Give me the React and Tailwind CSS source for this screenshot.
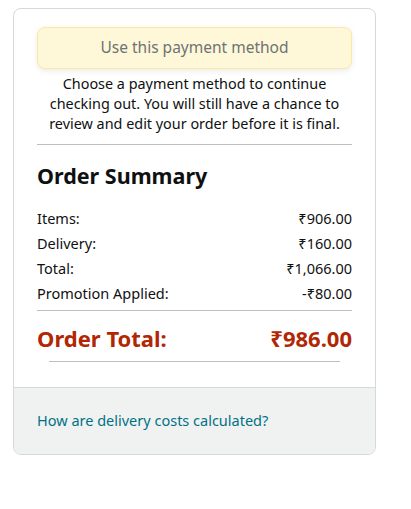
export default function App() {
  const rows = [
    ['Items:', '₹906.00'],
    ['Delivery:', '₹160.00'],
    ['Total:', '₹1,066.00'],
    ['Promotion Applied:', '-₹80.00'],
  ]

  return (
    <div className="min-h-screen bg-white font-['Noto_Sans',sans-serif] text-[#0f1111]">
      <div className="pt-2 pl-[13px]">
        <div className="w-[363px] rounded-lg border border-[#d5d9d9] overflow-hidden">
          <div className="px-[23px] pt-[18px] pb-[25px]">
            <button className="w-full h-[42px] rounded-lg border border-[#fce8a4] bg-[#fef8d9] text-[15.5px] text-[#6f7373] shadow-[0_2px_5px_rgba(213,217,217,0.5)]">
              Use this payment method
            </button>
            <p className="mt-[5px] text-center text-[14.4px] leading-[20px] px-1">
              Choose a payment method to continue checking out. You will still have a chance to review and edit your order before it is final.
            </p>
            <div className="mt-[10px] border-t border-[#bbbfbf]" />
            <h2 className="mt-[16px] text-[21.5px] font-bold leading-[30px]">Order Summary</h2>
            <div className="mt-[15px] text-[14.5px]">
              {rows.map(([label, value]) => (
                <div key={label} className="flex justify-between h-[25px] leading-[25px]">
                  <span>{label}</span>
                  <span>{value}</span>
                </div>
              ))}
            </div>
            <div className="mt-[4px] border-t border-[#bbbfbf]" />
            <div className="flex justify-between mt-[12px] text-[22px] font-bold text-[#b12704] leading-[30px]">
              <span>Order Total:</span>
              <span>₹986.00</span>
            </div>
            <div className="mt-[8px] mx-3 border-t border-[#bbbfbf]" />
          </div>
          <div className="bg-[#f0f2f2] border-t border-[#d5d9d9] px-[23px] pt-[22px] pb-[24px]">
            <a className="block text-[14.5px] text-[#007185] leading-[20px]">How are delivery costs calculated?</a>
          </div>
        </div>
      </div>
    </div>
  )
}
